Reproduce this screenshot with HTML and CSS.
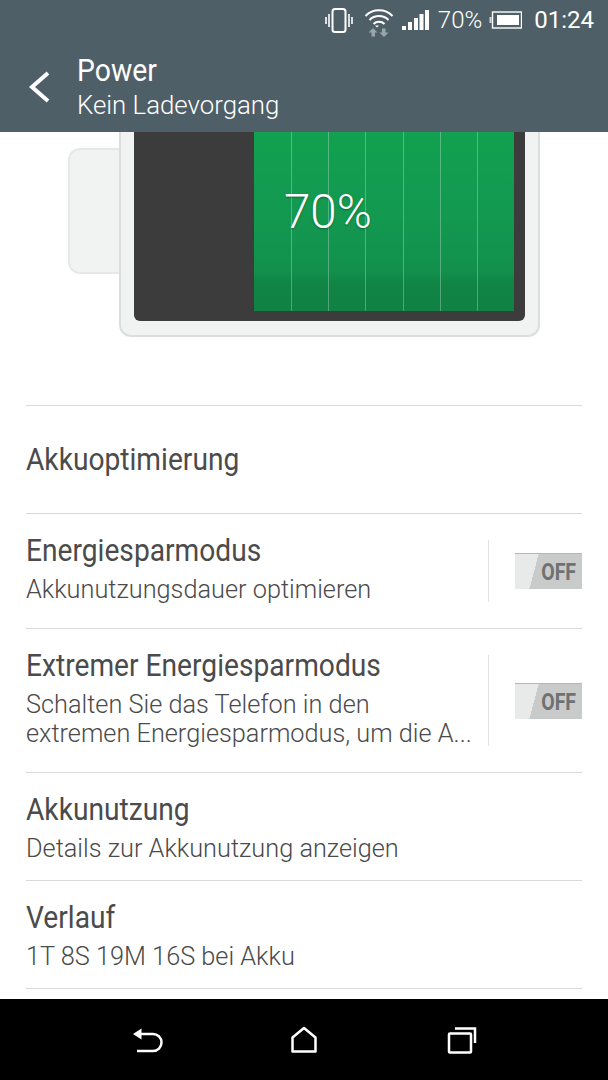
FILE: index.html
```html
<!DOCTYPE html>
<html lang="de">
<head>
<meta charset="utf-8">
<title>Power</title>
<link rel="stylesheet" href="styles.css">
</head>
<body>
<div class="screen">
  <header class="header">
    <div class="status">
      <svg class="ic-vib" width="28" height="26" viewBox="0 0 28 26" fill="none" stroke="#fff" stroke-width="2"><rect x="7.500" y="2" width="13" height="23" rx="2.500"/><path d="M4 7v13M24 7v13M1 10v7M27 10v7" stroke-width="1.600"/></svg>
      <svg class="ic-wifi" width="30" height="30" viewBox="0 0 30 30" fill="none"><g stroke="#fff" stroke-width="2"><path d="M1.500 9a19 19 0 0 1 27 0"/><path d="M5.500 13a13.500 13.500 0 0 1 19 0"/><path d="M9.500 17a8 8 0 0 1 11 0"/></g><path d="M15 18.500l-2 2-2-2z" fill="#fff"/><path d="M9 21l4.500 4.500H11v4H7.500v-4H4.500zM20 30l-4.500-4.500H18v-4h3.500v4h3z" fill="#9aa5ab"/></svg>
      <svg class="ic-sig" width="27" height="22" viewBox="0 0 27 22" fill="#fff"><rect x="0" y="17" width="4" height="4"/><rect x="6" y="13" width="4" height="8"/><rect x="12" y="9" width="4" height="12"/><rect x="17.500" y="5" width="4" height="16"/><rect x="23" y="1" width="4" height="20"/></svg>
      <span class="pct">70%</span>
      <svg class="ic-bat" width="33" height="20" viewBox="0 0 33 20" fill="none"><path d="M0.500 7h2v6h-2z" fill="#cfd5d8"/><rect x="3.500" y="2" width="29" height="16" stroke="#fff" stroke-width="1.400"/><rect x="8" y="5" width="22" height="10" fill="#fff"/></svg>
      <span class="clock">01:24</span>
    </div>
    <div class="appbar">
      <svg class="ic-back" width="24" height="34" viewBox="0 0 24 34" fill="none" stroke="#fff" stroke-width="4"><path d="M21 3L5 17l16 14"/></svg>
      <div class="appbar-text">
        <div class="app-title"><span class="cond">Power</span></div>
        <div class="app-sub">Kein Ladevorgang</div>
      </div>
    </div>
  </header>

  <main class="content">
    <section class="battery">
      <div class="nub"></div>
      <div class="shell">
        <div class="cell">
          <div class="level">
            <i></i><i></i><i></i><i></i><i></i><i></i>
            <span class="level-text">70%</span>
          </div>
        </div>
      </div>
    </section>

    <div class="row row-single"><div class="row-main"><div class="title"><span class="cond">Akkuoptimierung</span></div></div></div>

    <div class="row row-two row-tall">
      <div class="row-main">
        <div class="title"><span class="cond">Energiesparmodus</span></div>
        <div class="sub">Akkunutzungsdauer optimieren</div>
      </div>
      <div class="toggle-wrap"><div class="toggle"><span class="off">OFF</span></div></div>
    </div>

    <div class="row row-three">
      <div class="row-main">
        <div class="title"><span class="cond">Extremer Energiesparmodus</span></div>
        <div class="sub">Schalten Sie das Telefon in den<br>extremen Energiesparmodus, um die A...</div>
      </div>
      <div class="toggle-wrap"><div class="toggle"><span class="off">OFF</span></div></div>
    </div>

    <div class="row row-two">
      <div class="row-main">
        <div class="title"><span class="cond">Akkunutzung</span></div>
        <div class="sub">Details zur Akkunutzung anzeigen</div>
      </div>
    </div>

    <div class="row row-two">
      <div class="row-main">
        <div class="title"><span class="cond">Verlauf</span></div>
        <div class="sub">1T 8S 19M 16S bei Akku</div>
      </div>
    </div>
  </main>

  <nav class="navbar">
    <svg width="32" height="28" viewBox="0 0 32 28" fill="none" stroke="#fff" stroke-width="2.500"><path d="M5 25h16a8.500 8.500 0 0 0 0-17H8"/><path d="M9.500 2.500v11L1 8z" fill="#fff" stroke="none"/></svg>
    <svg width="28" height="28" viewBox="0 0 28 28" fill="none" stroke="#fff" stroke-width="2.500" stroke-linejoin="round"><path d="M14 2L2.500 11.500V25.500h23V11.500z"/></svg>
    <svg width="30" height="28" viewBox="0 0 30 28" fill="none" stroke="#fff" stroke-width="2.500"><rect x="2" y="7.500" width="22" height="19" rx="1"/><path d="M8 2.500h20V17"/></svg>
  </nav>
</div>
</body>
</html>
```
FILE: styles.css
```css
* { box-sizing: border-box; }
html, body { margin: 0; padding: 0; }
body { font-family: Roboto, "Noto Sans", sans-serif; background: #fff; }
.screen { width: 608px; height: 1080px; display: flex; flex-direction: column; overflow: hidden; }

.header { height: 132px; flex: none; background: #4f5f68; color: #fff; position: relative; z-index: 1; }
.status { height: 40px; display: flex; align-items: center; justify-content: flex-end; padding: 0 14px 0 0; }
.ic-vib { margin-right: 11px; }
.ic-wifi { margin-right: 8px; margin-top: 3px; }
.ic-sig { margin-right: 9px; margin-top: -1px; }
.pct { font-size: 24px; font-weight: 300; margin-right: 7px; }
.ic-bat { margin-right: 12px; }
.clock { font-size: 24px; font-weight: 400; }

.appbar { display: flex; align-items: flex-start; padding-left: 27px; }
.ic-back { margin-top: 30px; }
.appbar-text { margin-left: 26px; margin-top: 8px; }
.app-title { font-size: 32px; line-height: 44px; height: 44px; font-weight: 400; }
.app-title .cond { transform: scaleX(0.886); }
.app-sub { font-size: 25.800px; font-weight: 300; line-height: 26px; }

.cond { display: inline-block; transform: scaleX(0.88); transform-origin: 0 50%; white-space: nowrap; }

.content { flex: 1; min-height: 0; padding: 0 26px; display: flex; flex-direction: column; }

.battery { height: 274px; flex: none; display: flex; align-items: flex-start; padding-left: 42px; border-bottom: 1px solid #d9d9d9; }
.nub { width: 51px; height: 126px; margin-top: 16px; background: #f1f3f3; border: 2px solid #e6e8e8; border-right: 0; border-radius: 12px 0 0 12px; }
.shell { width: 421px; height: 206px; margin-top: -1px; background: #f1f3f3; border: 2px solid #dcdede; border-top: 0; border-radius: 0 0 12px 12px; padding: 0 13px 14px; }
.cell { height: 100%; background: #3c3c3c; border-radius: 0 0 6px 6px; padding: 0 11px 10px 120px; }
.level { height: 100%; position: relative; display: flex; padding-left: 37px; gap: 36.200px; background: linear-gradient(#12a150 0%, #139850 50%, #12904c 78%, #108544 84%, #108244 100%); }
.level i { width: 1px; height: 100%; background: rgba(255,255,255,.28); flex: none; }
.level-text { position: absolute; left: 30px; top: 51px; font-size: 47.500px; font-weight: 300; line-height: 60px; color: #fff; text-shadow: 0 1px 2px rgba(0,0,0,.35); }

.row { flex: none; display: flex; align-items: stretch; border-bottom: 1px solid #d9d9d9; }
.row-single { height: 108px; align-items: center; }
.row-two { height: 108px; }
.row-tall { height: 115px; }
.row-three { height: 144px; }
.row-main { flex: 1; min-width: 0; }
.row-two .row-main, .row-three .row-main { padding-top: 16px; }
.row-single .row-main { padding-bottom: 2px; }
.title { font-size: 32px; line-height: 40px; color: #4b4b4b; }
.sub { font-size: 25.300px; font-weight: 300; line-height: 29px; color: #4a4a4a; white-space: nowrap; margin-top: 5px; }

.toggle-wrap { width: 94px; flex: none; display: flex; justify-content: flex-end; align-items: center; border-left: 1px solid #e2e2e2; margin: 26px 0; }
.toggle { width: 67px; height: 36px; position: relative; background: linear-gradient(105deg, #e8e9e9 0 31%, #c9cbcb 31%); border-top: 1px solid #b5b7b7; display: flex; align-items: center; justify-content: flex-end; padding-right: 6px; }
.off { font-size: 23px; font-weight: 700; color: #6f7173; transform: translateY(1px) scaleX(.85); transform-origin: 100% 50%; }

.navbar { height: 81px; flex: none; background: #000; display: flex; align-items: center; padding: 0 0 0 132px; gap: 0; }
.navbar svg:nth-child(2) { margin-left: 126px; }
.navbar svg:nth-child(3) { margin-left: 129px; }
```
